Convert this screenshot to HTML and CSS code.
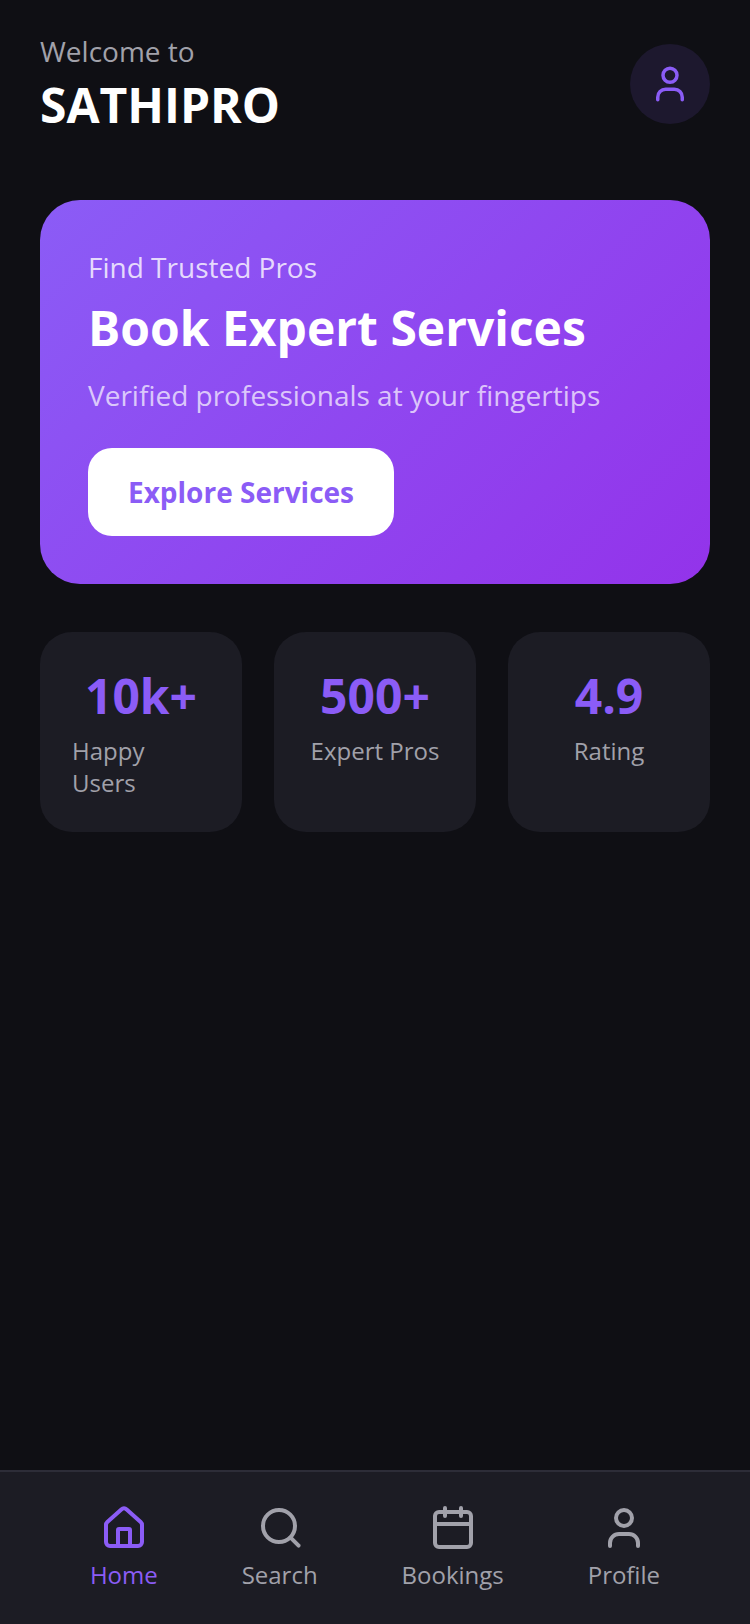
FILE: index.html
```html
<!DOCTYPE html>
<html lang="en">
<head>
  <meta charset="UTF-8">
  <meta name="viewport" content="width=device-width, initial-scale=1">
  <title>SathiPro</title>
  <link rel="stylesheet" href="styles.css">
</head>
<body>
  <div class="app">
    <main class="content">
      <header class="top">
        <div>
          <p class="welcome">Welcome to</p>
          <h1 class="brand">SATHIPRO</h1>
        </div>
        <div class="avatar">
          <svg class="avatar-icon" viewBox="0 0 24 24">
            <circle cx="12" cy="7" r="4"/>
            <path d="M5 21v-1.5A4.5 4.5 0 0 1 9.500 15h5a4.500 4.500 0 0 1 4.500 4.500V21"/>
          </svg>
        </div>
      </header>

      <section class="hero">
        <p class="hero-kicker">Find Trusted Pros</p>
        <h2 class="hero-title">Book Expert Services</h2>
        <p class="hero-sub">Verified professionals at your fingertips</p>
        <button class="hero-btn">Explore Services</button>
      </section>

      <section class="stats">
        <div class="stat">
          <div class="stat-num">10k+</div>
          <div class="stat-label">Happy Users</div>
        </div>
        <div class="stat">
          <div class="stat-num">500+</div>
          <div class="stat-label">Expert Pros</div>
        </div>
        <div class="stat">
          <div class="stat-num">4.9</div>
          <div class="stat-label">Rating</div>
        </div>
      </section>
    </main>

    <nav class="nav">
      <a class="nav-item active">
        <svg class="nav-icon" viewBox="0 0 24 24">
          <path d="M3 11a2 2 0 0 1 .66-1.48L10.660 3.200a2 2 0 0 1 2.680 0L20.340 9.520A2 2 0 0 1 21 11v8.500a2 2 0 0 1-2 2H5a2 2 0 0 1-2-2z"/>
          <path d="M9 21.500V13.500a.5.5 0 0 1 .5-.5h5a.5.5 0 0 1 .5.5v8"/>
        </svg>
        <span>Home</span>
      </a>
      <a class="nav-item">
        <svg class="nav-icon" viewBox="0 0 24 24">
          <circle cx="11.500" cy="11.500" r="8"/>
          <path d="M21.300 21.300l-4-4"/>
        </svg>
        <span>Search</span>
      </a>
      <a class="nav-item">
        <svg class="nav-icon" viewBox="0 0 24 24">
          <rect x="3" y="4.500" width="18" height="17.500" rx="2"/>
          <path d="M16 2.500v4M8 2.500v4M3 10.500h18"/>
        </svg>
        <span>Bookings</span>
      </a>
      <a class="nav-item">
        <svg class="nav-icon" viewBox="0 0 24 24">
          <circle cx="12" cy="7.500" r="4"/>
          <path d="M5 21.500V20a4.500 4.500 0 0 1 4.500-4.500h5A4.500 4.500 0 0 1 19 20v1.500"/>
        </svg>
        <span>Profile</span>
      </a>
    </nav>
  </div>
</body>
</html>
```

FILE: styles.css
```css
* {
  box-sizing: border-box;
}

body {
  margin: 0;
  background: #0f0f14;
  font-family: "Open Sans", sans-serif;
}

.app {
  display: flex;
  flex-direction: column;
  height: 1624px;
}

.content {
  flex: 1;
  padding: 31px 40px 0;
}

.top {
  display: flex;
  justify-content: space-between;
  align-items: center;
  margin-bottom: 63px;
}

.welcome {
  margin: 0 0 2px;
  font-size: 28px;
  line-height: 40px;
  color: #a1a1aa;
}

.brand {
  margin: 0;
  font-size: 48px;
  line-height: 64px;
  font-weight: 700;
  color: #fff;
}

.avatar {
  width: 80px;
  height: 80px;
  border-radius: 50%;
  background: #1d182e;
  display: flex;
  align-items: center;
  justify-content: center;
}

.avatar-icon {
  width: 42px;
  height: 42px;
  fill: none;
  stroke: #8b5cf6;
  stroke-width: 2;
  stroke-linecap: round;
  stroke-linejoin: round;
}

.hero {
  background: linear-gradient(135deg, #8b5cf6, #9333ea);
  border-radius: 40px;
  padding: 47px 48px 0;
  height: 384px;
}

.hero-kicker {
  margin: 0 0 9px;
  font-size: 28px;
  line-height: 40px;
  color: rgba(255, 255, 255, 0.8);
}

.hero-title {
  margin: 0 0 15px;
  font-size: 48px;
  line-height: 64px;
  font-weight: 700;
  color: #fff;
}

.hero-sub {
  margin: 0 0 33px;
  font-size: 28px;
  line-height: 40px;
  color: rgba(255, 255, 255, 0.7);
}

.hero-btn {
  display: block;
  width: 306px;
  height: 88px;
  border: none;
  border-radius: 24px;
  background: #fff;
  color: #8b5cf6;
  font-family: inherit;
  font-size: 28px;
  font-weight: 700;
}

.stats {
  display: flex;
  gap: 32px;
  margin-top: 48px;
}

.stat {
  flex: 1;
  height: 200px;
  padding: 32px;
  border-radius: 32px;
  background: #1c1c24;
  text-align: center;
}

.stat-num {
  font-size: 48px;
  line-height: 64px;
  font-weight: 700;
  color: #8b5cf6;
}

.stat-label {
  margin-top: 7px;
  font-size: 24px;
  line-height: 32px;
  color: #a1a1aa;
  text-align: left;
}

.stat:not(:first-child) .stat-label {
  text-align: center;
}

.nav {
  display: flex;
  justify-content: space-evenly;
  height: 154px;
  padding: 31px 6px 0;
  background: #1c1c24;
  border-top: 2px solid #2d2d38;
}

.nav-item {
  display: flex;
  flex-direction: column;
  align-items: center;
  gap: 8px;
  font-size: 24px;
  line-height: 32px;
  color: #a1a1aa;
}

.nav-item.active {
  color: #8b5cf6;
}

.nav-icon {
  width: 48px;
  height: 48px;
  fill: none;
  stroke: currentColor;
  stroke-width: 2;
  stroke-linecap: round;
  stroke-linejoin: round;
}
```
